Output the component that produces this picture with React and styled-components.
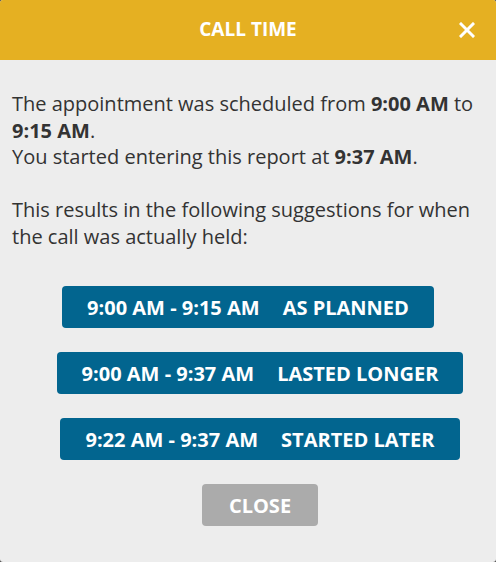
import React from "react";
import styled, { createGlobalStyle } from "styled-components";

const Global = createGlobalStyle`
  html, body { margin: 0; padding: 0; background: #4d4d4d; }
  body { font-family: "Open Sans", "Liberation Sans", sans-serif; }
  * { box-sizing: border-box; }
`;

const Dialog = styled.div`
  width: 496px;
  height: 562px;
  background: #ededed;
  border-radius: 3px;
  overflow: hidden;
  display: flex;
  flex-direction: column;
`;

const Header = styled.div`
  height: 60px;
  flex: none;
  background: #e5b022;
  display: grid;
  grid-template-columns: 60px 1fr 60px;
  align-items: center;
`;

const Title = styled.h1`
  grid-column: 2;
  margin: 0 0 3px;
  text-align: center;
  color: #fff;
  font-size: 19px;
  font-weight: 700;
  letter-spacing: 0;
`;

const CloseX = styled.button`
  grid-column: 3;
  justify-self: end;
  margin-right: 21px;
  width: 16px;
  height: 16px;
  padding: 0;
  border: none;
  background: none;
  display: flex;
  cursor: pointer;
`;

const Body = styled.div`
  flex: 1;
  padding: 31px 12px 36px 12px;
  display: flex;
  flex-direction: column;
`;

const Message = styled.p`
  margin: 0;
  color: #333;
  font-size: 20px;
  line-height: 26.5px;
  b { font-weight: 700; }
`;

const Actions = styled.div`
  margin-top: 36px;
  padding-left: 24px;
  display: flex;
  flex-direction: column;
  align-items: center;
  gap: 24px;
`;

const Suggestion = styled.button`
  height: 42px;
  padding: 0 25px;
  margin-right: ${(p) => p.$nudge || 0}px;
  border: none;
  border-radius: 4px;
  background: #02658f;
  color: #fff;
  font-family: inherit;
  font-size: 20px;
  font-weight: 700;
  display: flex;
  align-items: center;
  gap: 23px;
  white-space: nowrap;
  cursor: pointer;
`;

const CloseButton = styled.button`
  height: 42px;
  padding: 0 27px;
  border: none;
  border-radius: 4px;
  background: #ababab;
  color: #fff;
  font-family: inherit;
  font-size: 20px;
  font-weight: 700;
  cursor: pointer;
`;

const suggestions = [
  { range: "9:00 AM - 9:15 AM", label: "AS PLANNED", nudge: 24 },
  { range: "9:00 AM - 9:37 AM", label: "LASTED LONGER" },
  { range: "9:22 AM - 9:37 AM", label: "STARTED LATER" },
];

export default function App() {
  return (
    <>
      <Global />
      <Dialog>
        <Header>
          <Title>CALL TIME</Title>
          <CloseX aria-label="Close">
            <svg width="16" height="16" viewBox="0 0 16 16">
              <path d="M2 2 L14 14 M14 2 L2 14" stroke="#fff" strokeWidth="3" strokeLinecap="square" />
            </svg>
          </CloseX>
        </Header>
        <Body>
          <Message>
            The appointment was scheduled from <b>9:00 AM</b> to <b>9:15 AM</b>.
            <br />
            You started entering this report at <b>9:37 AM</b>.
            <br />
            <br />
            This results in the following suggestions for when the call was actually held:
          </Message>
          <Actions>
            {suggestions.map((s) => (
              <Suggestion key={s.label} $nudge={s.nudge}>
                <span>{s.range}</span>
                <span>{s.label}</span>
              </Suggestion>
            ))}
            <CloseButton>CLOSE</CloseButton>
          </Actions>
        </Body>
      </Dialog>
    </>
  );
}
